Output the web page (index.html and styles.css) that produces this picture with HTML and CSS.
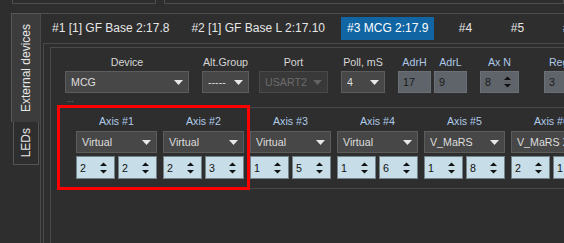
FILE: index.html
```html
<!DOCTYPE html>
<html>
<head>
<meta charset="utf-8">
<link rel="stylesheet" href="styles.css">
</head>
<body>
<div class="top-strip">
  <div class="ghost ghost-a"></div>
  <div class="ghost ghost-b"></div>
</div>
<div class="main">
  <div class="side">
    <div class="vtab vtab-active"><span class="vtext">External devices</span></div>
    <div class="vtab vtab-plain"><span class="vtext">LEDs</span></div>
  </div>
  <div class="content">
    <div class="tabbar">
      <div class="tab">#1 [1] GF Base 2:17.8</div>
      <div class="tab">#2 [1] GF Base L 2:17.10</div>
      <div class="tab tab-active">#3 MCG 2:17.9</div>
      <div class="tab">#4</div>
      <div class="tab">#5</div>
      <div class="tab">#6</div>
    </div>
    <div class="page">
      <div class="inner">
        <div class="fields">
          <div class="field f-device">
            <div class="lbl">Device</div>
            <div class="select"><span>MCG</span><svg class="arrow" width="9" height="5"><polygon points="0,0 9,0 4.5,5"/></svg></div>
          </div>
          <div class="field f-alt">
            <div class="lbl">Alt.Group</div>
            <div class="select"><span>-----</span><svg class="arrow" width="9" height="5"><polygon points="0,0 9,0 4.5,5"/></svg></div>
          </div>
          <div class="field f-port">
            <div class="lbl">Port</div>
            <div class="select select-disabled"><span>USART2</span><svg class="arrow" width="9" height="5"><polygon points="0,0 9,0 4.5,5"/></svg></div>
          </div>
          <div class="field f-poll">
            <div class="lbl">Poll, mS</div>
            <div class="select"><span>4</span><svg class="arrow" width="9" height="5"><polygon points="0,0 9,0 4.5,5"/></svg></div>
          </div>
          <div class="field f-adrh">
            <div class="lbl lbl-blue">AdrH</div>
            <div class="edit">17</div>
          </div>
          <div class="field f-adrl">
            <div class="lbl lbl-blue">AdrL</div>
            <div class="edit">9</div>
          </div>
          <div class="field f-axn">
            <div class="lbl lbl-blue">Ax N</div>
            <div class="edit spin-gray"><span>8</span><svg class="spin-arrows" width="7" height="12"><polygon points="0,4 3.5,0.5 7,4"/><polygon points="0,8 7,8 3.5,11.5"/></svg></div>
          </div>
          <div class="field f-reg">
            <div class="lbl lbl-blue">Reg N</div>
            <div class="edit">3</div>
          </div>
        </div>
        <div class="dots">...</div>
        <div class="axes">
          <div class="axis">
            <div class="axis-lbl">Axis #1</div>
            <div class="select"><span>Virtual</span><svg class="arrow" width="9" height="5"><polygon points="0,0 9,0 4.5,5"/></svg></div>
            <div class="spins">
              <div class="spin"><span>2</span><svg class="spin-arrows" width="7" height="12"><polygon points="0,4 3.5,0.5 7,4"/><polygon points="0,8 7,8 3.5,11.5"/></svg></div>
              <div class="spin"><span>2</span><svg class="spin-arrows" width="7" height="12"><polygon points="0,4 3.5,0.5 7,4"/><polygon points="0,8 7,8 3.5,11.5"/></svg></div>
            </div>
          </div>
          <div class="axis">
            <div class="axis-lbl">Axis #2</div>
            <div class="select"><span>Virtual</span><svg class="arrow" width="9" height="5"><polygon points="0,0 9,0 4.5,5"/></svg></div>
            <div class="spins">
              <div class="spin"><span>2</span><svg class="spin-arrows" width="7" height="12"><polygon points="0,4 3.5,0.5 7,4"/><polygon points="0,8 7,8 3.5,11.5"/></svg></div>
              <div class="spin"><span>3</span><svg class="spin-arrows" width="7" height="12"><polygon points="0,4 3.5,0.5 7,4"/><polygon points="0,8 7,8 3.5,11.5"/></svg></div>
            </div>
          </div>
          <div class="axis">
            <div class="axis-lbl">Axis #3</div>
            <div class="select"><span>Virtual</span><svg class="arrow" width="9" height="5"><polygon points="0,0 9,0 4.5,5"/></svg></div>
            <div class="spins">
              <div class="spin"><span>1</span><svg class="spin-arrows" width="7" height="12"><polygon points="0,4 3.5,0.5 7,4"/><polygon points="0,8 7,8 3.5,11.5"/></svg></div>
              <div class="spin"><span>5</span><svg class="spin-arrows" width="7" height="12"><polygon points="0,4 3.5,0.5 7,4"/><polygon points="0,8 7,8 3.5,11.5"/></svg></div>
            </div>
          </div>
          <div class="axis">
            <div class="axis-lbl">Axis #4</div>
            <div class="select"><span>Virtual</span><svg class="arrow" width="9" height="5"><polygon points="0,0 9,0 4.5,5"/></svg></div>
            <div class="spins">
              <div class="spin"><span>1</span><svg class="spin-arrows" width="7" height="12"><polygon points="0,4 3.5,0.5 7,4"/><polygon points="0,8 7,8 3.5,11.5"/></svg></div>
              <div class="spin"><span>6</span><svg class="spin-arrows" width="7" height="12"><polygon points="0,4 3.5,0.5 7,4"/><polygon points="0,8 7,8 3.5,11.5"/></svg></div>
            </div>
          </div>
          <div class="axis">
            <div class="axis-lbl">Axis #5</div>
            <div class="select"><span>V_MaRS</span><svg class="arrow" width="9" height="5"><polygon points="0,0 9,0 4.5,5"/></svg></div>
            <div class="spins">
              <div class="spin"><span>1</span><svg class="spin-arrows" width="7" height="12"><polygon points="0,4 3.5,0.5 7,4"/><polygon points="0,8 7,8 3.5,11.5"/></svg></div>
              <div class="spin"><span>8</span><svg class="spin-arrows" width="7" height="12"><polygon points="0,4 3.5,0.5 7,4"/><polygon points="0,8 7,8 3.5,11.5"/></svg></div>
            </div>
          </div>
          <div class="axis">
            <div class="axis-lbl">Axis #6</div>
            <div class="select"><span>V_MaRS X</span><svg class="arrow" width="9" height="5"><polygon points="0,0 9,0 4.5,5"/></svg></div>
            <div class="spins">
              <div class="spin"><span>2</span><svg class="spin-arrows" width="7" height="12"><polygon points="0,4 3.5,0.5 7,4"/><polygon points="0,8 7,8 3.5,11.5"/></svg></div>
              <div class="spin"><span>1</span><svg class="spin-arrows" width="7" height="12"><polygon points="0,4 3.5,0.5 7,4"/><polygon points="0,8 7,8 3.5,11.5"/></svg></div>
            </div>
          </div>
        </div>
      </div>
    </div>
  </div>
</div>
<div class="highlight"></div>
</body>
</html>
```
FILE: styles.css
```css
* { box-sizing: border-box; }
html, body { margin: 0; padding: 0; }
body {
  position: relative;
  width: 564px;
  height: 243px;
  overflow: hidden;
  background: #2e2e2e;
  font-family: "Liberation Sans", Arial, sans-serif;
  color: #e4e4e4;
}
.top-strip {
  display: flex;
  height: 13px;
}
.ghost {
  height: 4px;
  border: 1px solid #4e4e4e;
  border-top: none;
}
.ghost-a { margin-left: 12px; width: 299px; }
.ghost-b { margin-left: 8px; width: 400px; flex: none; }

.main {
  display: flex;
  height: 230px;
}
.side {
  width: 40px;
  flex: none;
  padding-left: 11px;
}
.vtab {
  display: flex;
  align-items: center;
  justify-content: center;
  font-size: 9pt;
  color: #e8e8e8;
}
.vtab-active {
  width: 29px;
  height: 109px;
  background: #3c3c3c;
  border-top: 1px solid #575757;
  border-left: 1px solid #575757;
}
.vtab-plain {
  margin-left: 2px;
  width: 26px;
  height: 43px;
  border: 1px solid #545454;
  border-top: none;
}
.vtext {
  writing-mode: vertical-rl;
  transform: rotate(180deg);
  white-space: nowrap;
}
.content {
  flex: none;
  width: 700px;
  border-left: 1px solid #4a4a4a;
  border-top: 1px solid #4e4e4e;
}
.tabbar {
  display: flex;
  height: 29px;
  align-items: flex-start;
}
.tab {
  margin: 3px 5px 0;
  height: 23px;
  line-height: 23px;
  padding: 0 6px;
  min-width: 42px;
  text-align: center;
  font-size: 9pt;
  color: #e6e6e6;
  white-space: nowrap;
}
.tab-active {
  background: #1165a2;
  color: #ffffff;
}
.page {
  margin-left: 2px;
  height: 200px;
  border-left: 1px solid #4a4a4a;
  border-top: 1px solid #4a4a4a;
}
.inner {
  margin: 3px 0 0 6px;
  height: 200px;
  border-left: 1px solid #4a4a4a;
  border-top: 1px solid #4a4a4a;
}
.fields {
  display: flex;
  padding: 7px 0 0 14px;
}
.field {
  display: flex;
  flex-direction: column;
  align-items: center;
  flex: none;
}
.lbl {
  height: 14px;
  line-height: 14px;
  margin-bottom: 2px;
  font-size: 8pt;
  color: #d6d6d6;
  white-space: nowrap;
}
.lbl-blue { color: #adc8e6; }
.f-device { width: 124px; }
.f-alt { width: 47px; margin-left: 13px; }
.f-port { width: 69px; margin-left: 10px; }
.f-poll { width: 44px; margin-left: 13px; }
.f-adrh { width: 33px; margin-left: 13px; }
.f-adrl { width: 33px; margin-left: 3px; }
.f-axn { width: 39px; margin-left: 13px; }
.f-reg { width: 40px; margin-left: 25px; }

.select {
  display: flex;
  align-items: center;
  justify-content: space-between;
  width: 100%;
  height: 22px;
  padding: 0 5px 0 5px;
  background: #474747;
  border: 1px solid #5c5c5c;
  font-size: 8pt;
  color: #dedede;
  white-space: nowrap;
  overflow: hidden;
}
.select span { overflow: hidden; }
.arrow { flex: none; fill: #e8e8e8; }
.select-disabled {
  background: #393939;
  border-color: #4a4a4a;
  color: #6c6c6c;
}
.select-disabled .arrow { fill: #626262; }

.edit {
  display: flex;
  align-items: center;
  justify-content: space-between;
  width: 100%;
  height: 22px;
  padding: 0 7px 0 4px;
  background: #5e6469;
  border: 1px solid #6a7076;
  font-size: 8pt;
  color: #1a1a1a;
}
.spin-arrows { flex: none; fill: #111111; }

.dots {
  height: 14px;
  line-height: 14px;
  margin-left: 16px;
  font-size: 8px;
  color: #8a8aa8;
}
.axes {
  display: flex;
  gap: 6px;
  margin-left: 7px;
  padding: 6px 0 9px 17px;
  border-top: 1px solid #474747;
  border-left: 1px solid #474747;
  border-bottom: 1px solid #474747;
}
.axis {
  display: flex;
  flex-direction: column;
  align-items: center;
  width: 81px;
  flex: none;
}
.axis-lbl {
  height: 14px;
  line-height: 14px;
  margin-bottom: 3px;
  font-size: 8pt;
  color: #afcbe8;
  white-space: nowrap;
}
.spins {
  display: flex;
  gap: 3px;
  margin-top: 3px;
}
.spin {
  display: flex;
  align-items: center;
  justify-content: space-between;
  width: 39px;
  height: 23px;
  padding: 0 7px 0 3px;
  background: #c7dde7;
  border: 1px solid #75848b;
  font-size: 8pt;
  color: #111111;
}
.highlight {
  position: absolute;
  left: 57px;
  top: 105px;
  width: 193px;
  height: 85px;
  border: 3px solid #ff0000;
}
```
